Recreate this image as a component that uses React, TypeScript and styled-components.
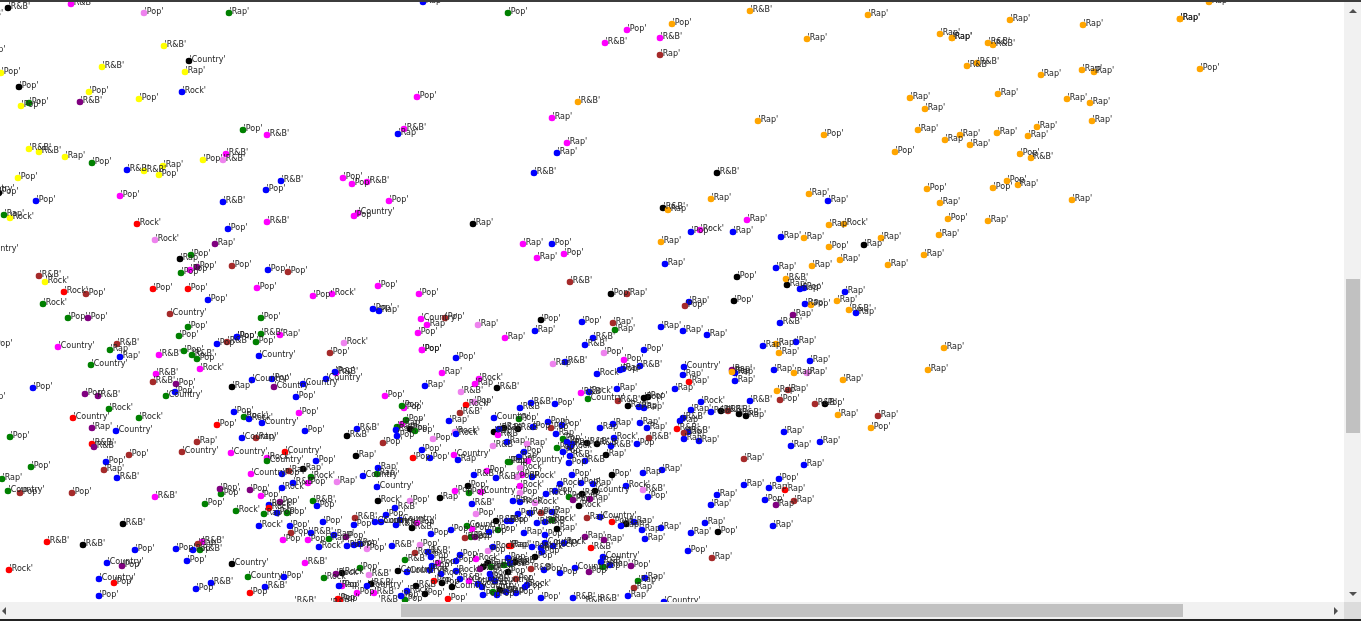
import React from "react";
import styled, { createGlobalStyle } from "styled-components";

const GlobalStyle = createGlobalStyle`
  html, body { margin: 0; padding: 0; background: #fff; overflow: hidden; }
  #root { height: 100vh; }
`;

const Window = styled.div`
  display: flex;
  flex-direction: column;
  width: 1361px;
  height: 621px;
  background: #fff;
`;
const TopEdge = styled.div`
  flex: 0 0 2px;
  background: #3c3c3c;
`;
const BottomEdge = styled.div`
  flex: 0 0 2px;
  background: #222;
`;
const Body = styled.div`
  flex: 1;
  display: flex;
  min-height: 0;
`;
const Viewport = styled.div`
  flex: 1;
  min-width: 0;
  overflow: hidden;
`;
const Plot = styled.svg`
  display: block;
  width: 1344px;
  height: 600px;
  filter: blur(0.3px);
`;
const Label = styled.text`
  font-family: "DejaVu Sans", sans-serif;
  font-size: 8px;
  fill: #222;
`;
const VBar = styled.div`
  flex: 0 0 17px;
  display: flex;
  flex-direction: column;
  align-items: center;
  background: #f1f1f1;
`;
const HBarRow = styled.div`
  flex: 0 0 17px;
  display: flex;
`;
const HBar = styled.div`
  flex: 1;
  display: flex;
  align-items: center;
  background: #f1f1f1;
`;
const Corner = styled.div`
  flex: 0 0 17px;
  background: #dcdcdc;
`;
const ArrowSlot = styled.div<{ $w: number; $h: number }>`
  flex: 0 0 auto;
  width: ${(p) => p.$w}px;
  height: ${(p) => p.$h}px;
  display: flex;
  align-items: center;
  justify-content: center;
`;
const Arrow = styled.div<{ $dir: "up" | "down" | "left" | "right" }>`
  width: 0;
  height: 0;
  border-style: solid;
  border-color: transparent;
  ${(p) =>
    p.$dir === "up"
      ? "border-width: 0 4px 4px 4px; border-bottom-color: #505050;"
      : p.$dir === "down"
      ? "border-width: 4px 4px 0 4px; border-top-color: #505050;"
      : p.$dir === "left"
      ? "border-width: 4px 4px 4px 0; border-right-color: #505050;"
      : "border-width: 4px 0 4px 4px; border-left-color: #505050;"}
`;
const VTrack = styled.div`
  flex: 1;
  align-self: stretch;
  padding: 260px 1px 0 2px;
`;
const VThumb = styled.div`
  height: 154px;
  background: #c1c1c1;
`;
const HTrack = styled.div`
  flex: 1;
  align-self: stretch;
  display: flex;
  align-items: center;
  padding-left: 394px;
`;
const HThumb = styled.div`
  width: 782px;
  height: 13px;
  background: #c1c1c1;
`;

const NAMES: Record<string, string> = {
  P: "'Pop'",
  R: "'Rap'",
  B: "'R&B'",
  K: "'Rock'",
  C: "'Country'",
};

const DATA: Record<string, string> = {
  none: `-19,15,B -14,51,P -22,190,C -18,250,C -7,345,P -14,398,P 294,602,B 330,604,B 583,602,B 597,600,B 378,601,B`,
  black: `8,8,B 189,61,C 19,87,P -1,193,P 180,259,R 232,387,R 303,469,R 123,524,B 83,545,B 232,564,C
    410,429,P 347,436,B 494,432,R 504,428,R 356,456,R 497,388,B 378,501,K 440,498,R 468,486,P 496,521,B 412,528,B
    342,573,K 398,571,C 483,567,R 442,583,P 452,587,C 371,584,B 416,586,B 425,594,P 500,590,P 488,563,R 515,562,B 508,572,P
    518,429,B 628,406,R 644,398,P 648,397,P 606,455,R 597,444,B 587,443,B 612,475,P
    595,491,C 582,494,R 579,506,K 557,529,R 626,524,R 535,557,P 718,532,P
    721,411,B 739,414,B 746,416,R 825,404,P
    717,173,B 663,208,B 473,224,R 611,294,P 737,277,P 734,301,P 541,320,P 864,245,R 787,285,R`,
  magenta: `71,4,B 267,135,B 226,154,B 120,196,P 267,222,B 190,270,P 257,288,P 313,296,P 332,294,K
    58,347,C 280,335,R 159,355,B 200,369,K 156,374,B 299,413,P 336,373,B 231,453,C 267,458,K 251,474,C 308,483,P
    261,496,P 155,497,B 283,540,P 308,540,P 202,542,B 305,563,B
    422,350,P 422,350,P 442,373,R 479,379,K 475,384,R 385,396,P 404,408,P 402,424,R 498,435,B 454,455,C 487,471,P
    455,491,P 481,492,C 472,529,P 417,523,P 438,563,P 476,559,K 469,581,C 342,586,P 357,593,P 374,593,B
    624,360,P 581,393,B 528,461,C 522,475,P 520,486,K
    343,178,P 352,184,P 367,182,B 389,201,P 354,216,P 358,213,C 700,230,K 747,220,R 523,244,R 537,258,R 564,254,P
    378,286,P 419,294,P 421,319,C 427,325,R 418,333,P 505,338,R
    627,30,P 660,38,B 605,43,B 417,97,P 552,118,R 404,129,B 567,143,R`,
  violet: `144,13,P 223,160,B 155,240,K 337,482,R 344,343,K 461,392,B 474,402,P 433,439,P 455,432,K 493,446,B
    410,501,P 476,514,P 367,549,P 420,545,P 488,551,P 369,575,B 604,353,P 553,364,R 527,444,R 520,468,K 517,477,P
    643,490,B 535,503,K 520,493,P 807,373,R 478,325,R`,
  green: `229,13,R 29,103,P 243,130,P 92,163,P 4,215,R 191,255,P 181,273,P 43,304,K
    68,318,P 261,318,P 188,327,P 179,336,P 110,350,R 91,365,C 184,351,P 192,355,B 197,359,P 261,334,B 256,342,P
    166,396,C 109,409,K 139,418,K 10,437,P 244,417,K 267,461,C 31,467,P 2,479,R 8,491,C 311,477,K 221,494,P 205,504,P
    313,501,B 236,511,K 264,514,R 287,513,P 329,539,R 200,550,B 248,577,C 324,578,K 402,406,P 406,420,P 397,427,R
    415,431,P 377,474,R 508,462,P 469,493,P 467,526,C 498,530,P 471,537,R 405,560,B 360,568,P 491,567,K 504,565,K
    405,600,P 493,592,K 588,399,C 519,419,P 563,439,P 557,448,P 510,462,P 569,497,P 552,520,K 603,567,P 638,581,R
    615,330,R 508,13,P 510,564,B`,
  yellow: `164,46,B 185,72,R 102,67,B 1,73,P 89,92,P 139,99,P 21,106,P 29,149,B 39,152,B 65,157,R 203,160,P
    144,171,B 163,166,R 159,175,P 18,178,P 10,218,K 45,282,K`,
  blue: `182,92,K 127,170,B 281,181,B 266,190,P 36,201,P 223,202,B 228,229,P 268,270,P 208,300,P
    120,357,R 217,344,P 237,337,P 237,337,P 259,356,C 175,392,P 252,380,C 272,379,P 303,384,C 326,379,C 335,372,P 296,397,P 33,388,P
    116,431,C 234,412,P 249,419,K 262,423,C 305,431,P 242,438,C 316,461,P 106,462,P 117,478,B 282,474,P 293,483,B 282,488,K
    317,506,P 269,505,K 277,513,P 259,526,K 290,526,P 323,522,P 311,533,B 334,535,R 319,547,K 135,550,P 176,549,P 193,550,P
    187,561,P 107,563,C 284,577,P 99,579,C 211,583,B 196,589,P 265,587,B 339,586,R 99,596,P
    456,358,P 425,386,R 449,421,R 494,418,C 396,430,R 397,436,P 357,429,B 499,429,B 507,442,R 422,450,P 430,458,P 456,434,K 458,460,R
    378,468,R 363,476,C 474,475,B 496,478,B 377,487,C 395,508,B 472,504,B 354,525,P 375,522,C 381,522,C 386,515,P 400,520,C 396,525,B
    431,534,P 451,530,P 507,521,P 489,532,P 347,546,P 354,545,P 360,544,P 392,546,B 428,552,B 431,557,P 460,555,P 456,561,P 493,547,K
    508,558,P 407,572,C 430,570,P 432,566,P 456,571,K 510,563,P 441,574,K 460,579,B 490,574,K 491,578,R 478,584,C 482,587,C 367,586,C
    407,591,K 401,596,P 483,595,P 497,595,P 506,592,R 495,581,C
    585,345,B 644,350,P 565,362,B 640,366,B 623,369,R 620,370,P 597,374,K 617,389,R 675,389,R 589,392,K 555,404,P 531,403,B 520,408,B
    639,407,R 644,408,R 533,427,P 548,422,P 562,425,P 556,434,R 600,428,R 613,424,R 640,423,R 647,428,R 614,438,K 611,446,B 637,444,P
    567,442,P 563,452,P 572,444,R 570,447,K 570,456,B 585,461,B 569,463,P 524,452,P 519,457,R 572,475,P 643,473,R 662,470,R 532,477,K
    560,484,K 581,483,P 593,484,R 626,486,K 648,497,P 555,491,P 546,494,K 513,501,R 520,502,K 518,514,P 530,513,R 552,512,R 511,521,P
    537,523,B 545,522,B 600,517,C 621,526,R 634,522,R 642,530,R 661,528,R 645,539,R 524,533,R 545,535,P 545,543,C 564,543,K 553,546,K
    532,547,P 541,548,K 542,552,P 603,557,C 601,562,B 610,565,R 575,568,C 560,573,P 544,570,P 645,578,R 628,596,R 527,585,K 525,587,P
    516,593,P 541,598,P 573,598,B 664,602,C
    763,346,R 796,342,R 810,361,R 684,367,C 683,375,R 735,373,R 735,381,R 774,370,R 750,401,B 701,402,K 691,410,R 711,412,B 683,418,B
    680,421,R 688,432,B 684,439,R 699,441,R 784,432,R 791,446,R 820,442,R 804,465,R 779,479,P 744,485,R 717,495,R 769,488,R 765,500,P
    711,505,R 705,523,R 691,533,R 773,526,R 688,551,P
    534,173,B 691,232,P 733,232,R 552,244,P 665,264,R 373,309,P 379,311,R 689,302,R 582,322,P 535,331,R 661,327,R 683,331,R 707,335,R 593,338,B
    828,201,R 781,237,R 776,268,R 800,289,R 804,288,P 845,292,R 856,313,R 805,304,R 780,323,B 423,2,R 398,134,R 557,153,R`,
  red: `137,224,K 64,292,K 153,289,P 188,289,P 73,418,C 217,425,P 92,444,B 285,452,C 269,508,K 47,542,B 9,570,K 114,583,P 250,593,P
    338,599,P 466,405,K 413,458,P 509,546,R 434,581,P 448,599,P 340,600,P 612,522,P 511,546,R 591,548,B 689,382,R 677,429,B 785,490,R`,
  brown: `232,266,P 288,272,P 39,276,B 86,294,P 170,314,C 117,344,B 227,342,B 330,353,P 153,382,B 129,455,P 197,442,R 182,452,C 256,438,R
    104,470,R 289,471,R 20,493,P 72,493,P 291,533,P 198,544,R
    460,413,B 383,443,P 355,518,B 465,538,R 415,553,K 551,428,P 618,401,B 649,438,B 541,513,P 587,518,R 531,569,B 634,588,R 516,579,P
    788,390,R 780,400,P 815,404,B 728,411,B 878,416,R 684,433,R 744,459,R 794,501,R 712,558,R 570,282,B 627,294,R 685,306,P 445,318,P 613,323,R 660,55,R`,
  purple: `80,102,B 215,244,R 197,267,P 88,318,P 176,384,P 85,394,P 98,396,B 274,387,C 92,428,R 94,447,B 220,489,P 250,490,P 280,502,P
    122,566,P 336,574,K 346,537,P 475,537,P 480,569,K 573,500,P 590,499,R 585,537,R 604,540,R 631,566,P 589,572,P 732,370,R 776,505,R 793,315,R`,
  orange: `776,344,R 779,353,R 732,372,R 794,373,R 843,380,R 777,391,R 838,415,R 871,428,P 944,348,R 928,370,R
    711,199,R 668,210,R 661,242,R 809,194,R 927,189,P 940,203,R 948,219,P 939,235,R 924,255,R 829,225,R 844,224,K 804,238,R 829,247,P 881,238,R
    840,260,R 812,266,R 888,265,R 786,279,B 837,301,R 849,310,B 811,305,P
    672,24,P 750,11,B 868,15,R 807,39,R 940,34,R 952,38,R 952,38,R 988,43,B 993,45,B 1010,20,R 1083,25,R 1180,19,R 1180,19,R 1209,2,R 1200,69,P
    967,66,B 977,63,B 1082,70,R 1094,72,R 1041,75,R 998,94,R 1067,99,R 1090,103,R 1092,121,R 910,98,R 925,109,R 578,102,B 758,121,R 824,135,P
    918,130,R 945,140,R 960,135,R 970,145,R 997,133,R 1028,136,R 1037,127,R 1020,154,P 1031,158,B 1007,181,P 1018,185,R 993,188,P 895,152,P 1072,200,R 988,221,R`,
};

const COLORS: Record<string, string> = {
  none: "none",
  black: "#000000",
  magenta: "#ff00ff",
  violet: "#ee82ee",
  green: "#008000",
  yellow: "#ffff00",
  blue: "#0000ff",
  red: "#ff0000",
  brown: "#a52a2a",
  purple: "#800080",
  orange: "#ffa500",
};

type Point = { x: number; y: number; label: string; color: string };

const POINTS: Point[] = Object.entries(DATA).flatMap(([key, text]) =>
  text
    .trim()
    .split(/\s+/)
    .map((item) => {
      const [x, y, code] = item.split(",");
      return { x: Number(x), y: Number(y), label: NAMES[code], color: COLORS[key] };
    })
);

export default function App() {
  return (
    <Window>
      <GlobalStyle />
      <TopEdge />
      <Body>
        <Viewport>
          <Plot viewBox="0 2 1344 600">
            {POINTS.filter((p) => p.color !== "none").map((p, i) => (
              <circle key={i} cx={p.x} cy={p.y} r={3.3} fill={p.color} />
            ))}
            {POINTS.map((p, i) => (
              <Label key={i} x={p.x + 0.5} y={p.y + 0.5}>
                {p.label}
              </Label>
            ))}
          </Plot>
        </Viewport>
        <VBar>
          <ArrowSlot $w={17} $h={17}>
            <Arrow $dir="up" />
          </ArrowSlot>
          <VTrack>
            <VThumb />
          </VTrack>
          <ArrowSlot $w={17} $h={17}>
            <Arrow $dir="down" />
          </ArrowSlot>
        </VBar>
      </Body>
      <HBarRow>
        <HBar>
          <ArrowSlot $w={7} $h={17}>
            <Arrow $dir="left" />
          </ArrowSlot>
          <HTrack>
            <HThumb />
          </HTrack>
          <ArrowSlot $w={16} $h={17}>
            <Arrow $dir="right" />
          </ArrowSlot>
        </HBar>
        <Corner />
      </HBarRow>
      <BottomEdge />
    </Window>
  );
}
